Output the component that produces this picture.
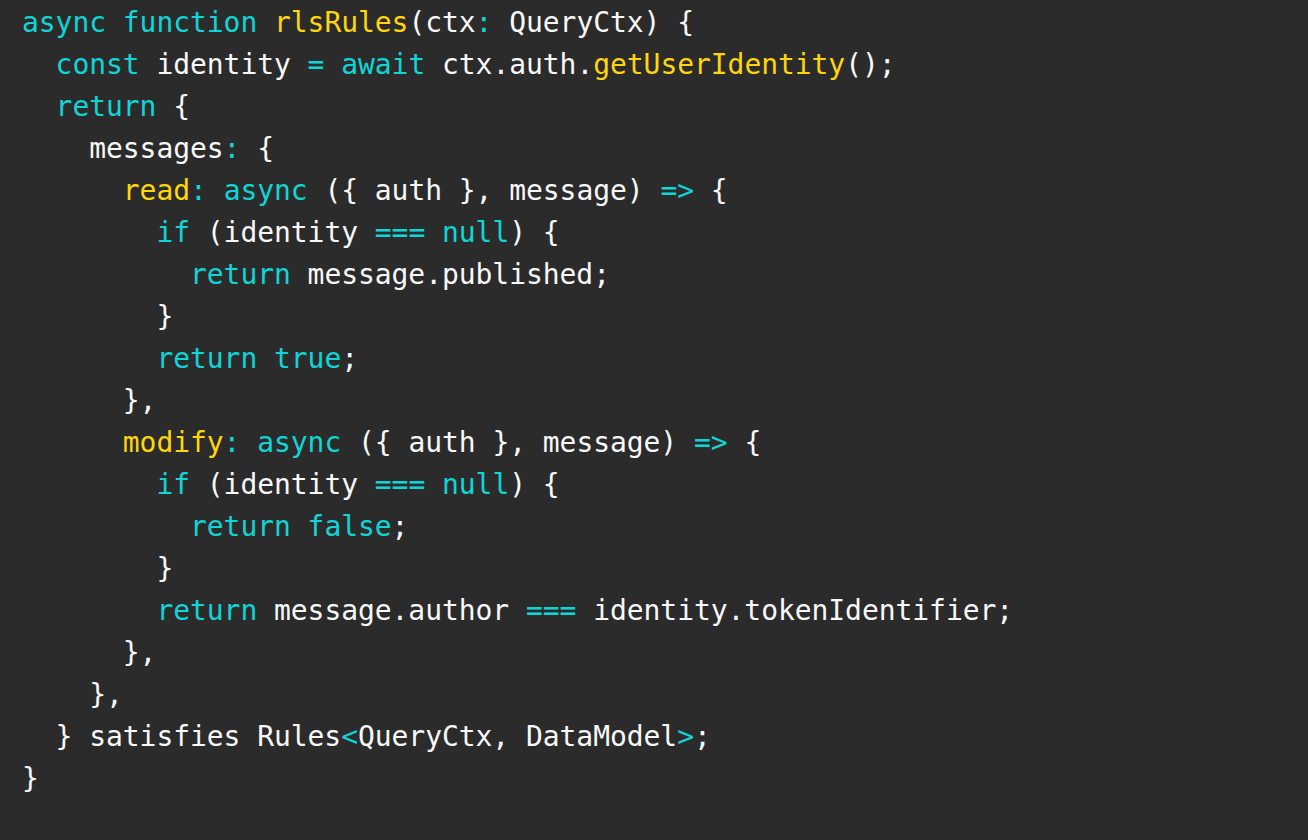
type Tok = [string, "k" | "f" | "p"]

const K = (s: string): Tok => [s, "k"]
const F = (s: string): Tok => [s, "f"]
const P = (s: string): Tok => [s, "p"]

const lines: Tok[][] = [
  [K("async"), P(" "), K("function"), P(" "), F("rlsRules"), P("(ctx"), K(":"), P(" QueryCtx) {")],
  [P("  "), K("const"), P(" identity "), K("="), P(" "), K("await"), P(" ctx.auth."), F("getUserIdentity"), P("();")],
  [P("  "), K("return"), P(" {")],
  [P("    messages"), K(":"), P(" {")],
  [P("      "), F("read"), K(":"), P(" "), K("async"), P(" ({ auth }, message) "), K("=>"), P(" {")],
  [P("        "), K("if"), P(" (identity "), K("==="), P(" "), K("null"), P(") {")],
  [P("          "), K("return"), P(" message.published;")],
  [P("        }")],
  [P("        "), K("return"), P(" "), K("true"), P(";")],
  [P("      },")],
  [P("      "), F("modify"), K(":"), P(" "), K("async"), P(" ({ auth }, message) "), K("=>"), P(" {")],
  [P("        "), K("if"), P(" (identity "), K("==="), P(" "), K("null"), P(") {")],
  [P("          "), K("return"), P(" "), K("false"), P(";")],
  [P("        }")],
  [P("        "), K("return"), P(" message.author "), K("==="), P(" identity.tokenIdentifier;")],
  [P("      },")],
  [P("    },")],
  [P("  } satisfies Rules"), K("<"), P("QueryCtx, DataModel"), K(">"), P(";")],
  [P("}")],
]

const color = {
  k: "text-[#0fd6d6]",
  f: "text-[#ffd60a]",
  p: "text-[#f8f8f8]",
}

export default function App() {
  return (
    <div className="min-h-[840px] w-full bg-[#2b2b2b] pl-[22px] pt-[2px]">
      <pre className="font-['DejaVu_Sans_Mono',Menlo,monospace] text-[28px] leading-[42px] tracking-[-0.06px] whitespace-pre">
        {lines.map((line, i) => (
          <div key={i}>
            {line.map(([text, kind], j) => (
              <span key={j} className={color[kind]}>
                {text}
              </span>
            ))}
          </div>
        ))}
      </pre>
    </div>
  )
}
